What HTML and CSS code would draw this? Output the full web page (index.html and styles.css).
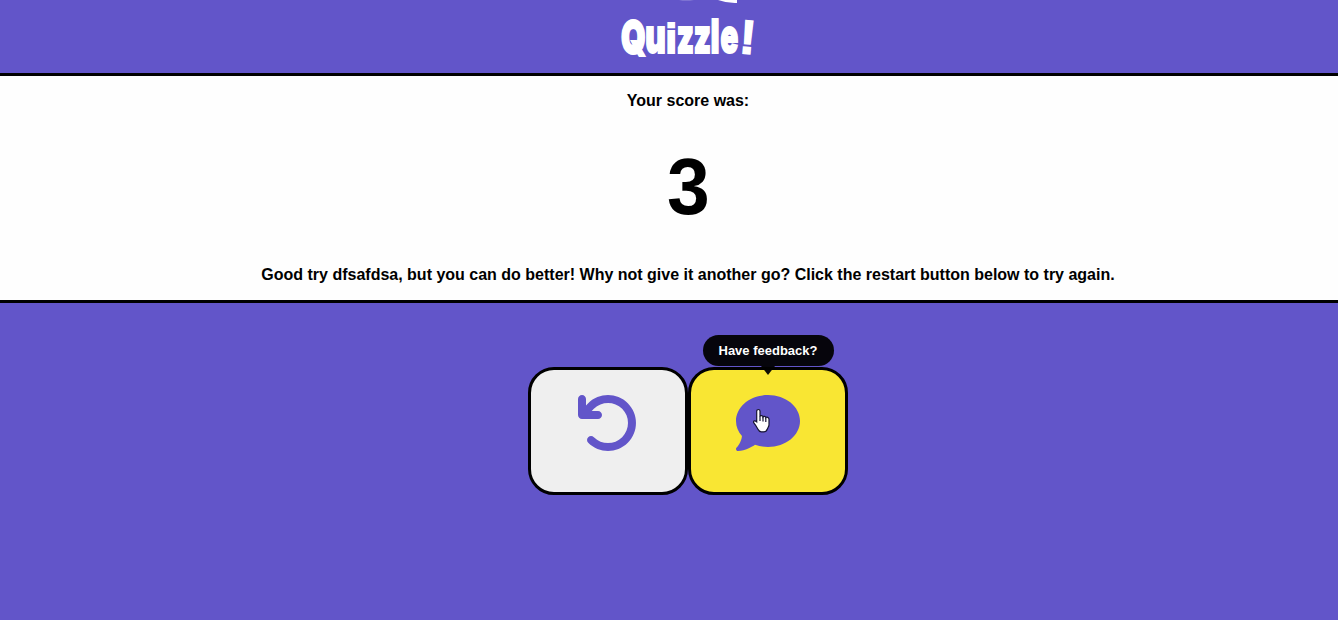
FILE: index.html
```html
<!DOCTYPE html>
<html lang="en">
<head>
<meta charset="utf-8">
<title>Quizzle!</title>
<link rel="stylesheet" href="styles.css">
</head>
<body>
<div class="page">
  <header class="header">
    <svg class="logo" viewBox="0 0 180 73" role="img" aria-label="Quizzle!">
      <path class="logo-mark" d="M81 0h15q-8 1.2-15 0z" opacity=".35"/>
      <path class="logo-mark" d="M120 0h19v3q-9 .5-19-3z"/>
      <text class="wordmark" transform="scale(.67 1)" y="54.500 53.500" x="34.500 70.500">Qu</text>
      <text class="wordmark wordmark-i" x="67.500" y="53">i</text>
      <text class="wordmark" transform="scale(.62 1)" y="53" x="127 154.500 182 197.500">zzle</text>
      <text class="wordmark wordmark-mark" x="140.500" y="53" rotate="5">!</text>
    </svg>
  </header>
  <main class="results">
    <p class="message">Your score was:</p>
    <p class="score">3</p>
    <p class="message">Good try dfsafdsa, but you can do better! Why not give it another go? Click the restart button below to try again.</p>
  </main>
  <nav class="actions">
    <button class="action" aria-label="Restart">
      <svg class="icon" viewBox="0 0 512 512"><path d="M125.7 160H176c17.7 0 32 14.3 32 32s-14.3 32-32 32H48c-17.7 0-32-14.3-32-32V64c0-17.7 14.3-32 32-32s32 14.3 32 32v51.2L97.6 97.6c87.5-87.5 229.3-87.5 316.8 0s87.5 229.3 0 316.8s-229.3 87.5-316.8 0c-12.5-12.5-12.5-32.8 0-45.3s32.8-12.5 45.3 0c62.5 62.5 163.8 62.5 226.3 0s62.5-163.8 0-226.3s-163.8-62.5-226.3 0L125.7 160z"/></svg>
    </button>
    <button class="action action-active" aria-label="Feedback">
      <svg class="icon" viewBox="0 0 512 512"><path d="M512 240c0 114.9-114.6 208-256 208c-37.1 0-72.3-6.4-104.1-17.9c-11.9 8.7-31.3 20.6-54.3 30.6C73.6 471.1 44.7 480 16 480c-6.500 0-12.300-3.900-14.800-9.900c-2.500-6-1.100-12.800 3.400-17.400l.3-.3c.3-.3 .7-.7 1.300-1.400c1.100-1.200 2.800-3.100 4.900-5.700c4.100-5 9.600-12.400 15.200-21.600c10-16.600 19.500-38.400 21.400-62.900C17.700 326.800 0 285.100 0 240C0 125.100 114.600 32 256 32s256 93.100 256 208z"/></svg>
      <span class="tooltip">Have feedback?</span>
      <svg class="pointer" viewBox="0 0 19 25"><path d="M6.300 1.500c1 0 1.700.7 1.700 1.600v5.200c.3-1.100 2.700-.9 3 .6.500-1 2.600-.7 2.800.7.700-.8 3.200-.4 3.200 1.600v5.500c0 1.500-.9 2.600-1.500 4-.6 1.700-1.400 3.100-3.900 3.100H9.300c-1.500 0-2.500-.9-3.300-2.400-1.200-2.300-2.100-4.100-4-6.300-1.300-1.500.4-3.400 2.700-1.200V3.100c0-.9.700-1.600 1.600-1.600z"/><path d="M8 8v5M11 9v4.500M13.800 10v4"/></svg>
    </button>
  </nav>
</div>
</body>
</html>
```

FILE: styles.css
```css
* { box-sizing: border-box; }

body {
  margin: 0;
  overflow: hidden;
  background: #6255c9;
  font-family: "Liberation Sans", Arial, sans-serif;
  font-weight: 700;
  color: #000;
}

.page {
  width: 1376px;
  height: 620px;
  display: flex;
  flex-direction: column;
}

.header {
  height: 73px;
  display: flex;
  justify-content: center;
}

.logo { width: 180px; height: 73px; }
.logo-mark { fill: #fff; }

.wordmark {
  font-family: Inter, sans-serif;
  font-size: 47px;
  font-weight: 900;
  fill: #fff;
  stroke: #fff;
  stroke-width: 2px;
}

.wordmark-i,
.wordmark-mark {
  font-family: "Liberation Sans", Arial, sans-serif;
  font-weight: 700;
}

.wordmark-i { font-size: 41px; }
.wordmark-mark { font-size: 48px; stroke-width: 1.500px; }

.results {
  height: 230px;
  display: flex;
  flex-direction: column;
  align-items: center;
  padding-top: 16px;
  background: #fefefe;
  border-top: 3px solid #000;
  border-bottom: 3px solid #000;
}

.message { margin: 0; font-size: 16px; line-height: 18px; }
.score { margin: 31px 0 33px; font-size: 80px; line-height: 92px; transform: scaleX(.96); }

.actions {
  display: flex;
  justify-content: center;
  padding-top: 64px;
}

.action {
  position: relative;
  width: 160px;
  height: 128px;
  display: flex;
  justify-content: center;
  align-items: flex-start;
  padding: 21px 0 0;
  background: #efefef;
  border: 3px solid #000;
  border-radius: 26px;
}

.action-active { background: #f9e633; }
.icon { width: 64px; height: 64px; fill: #6255c9; }

.tooltip {
  position: absolute;
  left: 12px;
  top: -35px;
  width: 131px;
  height: 31px;
  padding-right: 1px;
  border-radius: 16px;
  background: rgba(0, 0, 0, .94);
  color: #fff;
  font: 700 13px/31px "Liberation Sans", Arial, sans-serif;
  text-align: center;
}

.tooltip::after {
  content: "";
  position: absolute;
  left: 58px;
  top: 31px;
  border: solid transparent;
  border-width: 9px 7.500px 0;
  border-top-color: rgba(0, 0, 0, .94);
}

.pointer {
  position: absolute;
  left: 61px;
  top: 38px;
  width: 19px;
  height: 25px;
  fill: #fff;
  stroke: #171433;
  stroke-width: 1.200;
}
```
